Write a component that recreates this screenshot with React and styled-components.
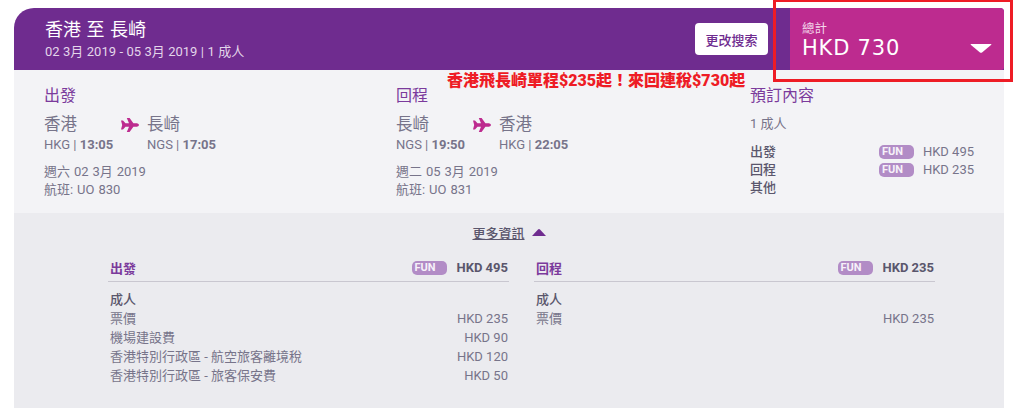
import React from 'react'
import styled, { createGlobalStyle } from 'styled-components'

const GlobalStyle = createGlobalStyle`
  html, body {
    margin: 0;
    background: #fff;
  }
  body {
    font-family: Roboto, "Noto Sans CJK TC", sans-serif;
    color: #77748a;
  }
`

const Page = styled.div`
  position: relative;
  width: 1024px;
  height: 414px;
  padding: 8px 20px 0 14px;
  box-sizing: border-box;
  overflow: hidden;
`

const Header = styled.header`
  display: flex;
  align-items: stretch;
  height: 62px;
  background: #6f2c8f;
  border-radius: 20px 4px 0 0;
  color: #fff;
`

const Trip = styled.div`
  flex: 1;
  padding: 11px 0 0 31px;
`

const TripTitle = styled.div`
  font-size: 18px;
  line-height: 22px;
  word-spacing: 1px;
`

const TripMeta = styled.div`
  margin-top: 2px;
  font-size: 13px;
  line-height: 18px;
  color: #e3d5ea;
  word-spacing: 0.2px;
`

const ChangeButton = styled.button`
  align-self: flex-start;
  width: 73px;
  height: 32px;
  margin: 15px 22px 0 0;
  padding: 0;
  border: 0;
  border-radius: 4px;
  background: #fff;
  color: #6f2c8f;
  font-family: inherit;
  font-size: 13px;
  font-weight: 500;
`

const Total = styled.div`
  position: relative;
  width: 214px;
  padding: 13px 0 0 12px;
  box-sizing: border-box;
  background: #bd2b8f;
  border-radius: 0 4px 3px 0;
`

const TotalLabel = styled.div`
  font-size: 12.5px;
  line-height: 16px;
  color: #f3d8ea;
`

const TotalAmount = styled.div`
  font-family: "DejaVu Sans", sans-serif;
  font-size: 21px;
  line-height: 23px;
  letter-spacing: 0.8px;
`

const Caret = styled.svg`
  position: absolute;
  right: 12px;
  top: 36px;
`

const Details = styled.section`
  display: grid;
  grid-template-columns: 352px 354px 1fr;
  height: 143px;
  padding: 14px 30px 0;
  box-sizing: border-box;
  background: #f3f3f6;
`

const Heading = styled.h2`
  margin: 0 0 5px;
  font-size: 16px;
  line-height: 24px;
  font-weight: 400;
  color: #7b3a9c;
`

const Route = styled.div`
  display: grid;
  grid-template-columns: 76px 27px auto;
  justify-content: start;
`

const City = styled.div`
  display: flex;
  align-items: center;
  font-size: 16.5px;
  line-height: 23px;
  color: #77748a;
`

const Plane = styled.svg`
  display: block;
`

const PlaneCell = styled.div`
  display: flex;
  align-items: center;
  margin-left: 1px;
`

const Times = styled.div`
  grid-column: ${p => (p.$first ? 'span 2' : 'auto')};
  font-size: 13px;
  line-height: 18px;
  white-space: nowrap;

  b {
    font-weight: 700;
  }
`

const FlightInfo = styled.div`
  margin-top: 9px;
  font-size: 13px;
  line-height: 18px;
  word-spacing: 0.7px;
`

const Summary = styled.div`
  padding-top: 2px;
  font-size: 13px;
  line-height: 18px;
`

const Travellers = styled.div`
  margin-bottom: 10px;
`

const SummaryRow = styled.div`
  display: flex;
  align-items: center;
  height: 18px;
`

const RowName = styled.span`
  flex: 1;
  font-weight: ${p => (p.$strong ? 500 : 400)};
  color: ${p => (p.$strong ? '#5a566c' : 'inherit')};
`

const Fun = styled.span`
  display: inline-block;
  width: 35px;
  height: 14px;
  margin-right: 9px;
  padding-left: 3px;
  box-sizing: border-box;
  border-radius: 5px;
  background: #b28cc6;
  color: #f6f1f9;
  font-size: 11px;
  line-height: 14px;
  font-weight: 700;
`

const More = styled.section`
  height: 195px;
  padding-top: 9px;
  box-sizing: border-box;
  background: #ebebef;
`

const MoreToggle = styled.div`
  display: flex;
  justify-content: center;
  align-items: center;
  gap: 7px;
  height: 20px;
  font-size: 13px;
  font-weight: 500;
  color: #5a566c;

  span {
    text-decoration: underline;
  }
`

const Breakdown = styled.div`
  display: grid;
  grid-template-columns: 401px 401px;
  column-gap: 25px;
  margin: 12px 0 0 94px;
`

const ColumnHead = styled.div`
  display: flex;
  align-items: center;
  height: 27px;
  margin-bottom: 8px;
  padding: 0 1px 0 2px;
  border-bottom: 1px solid #c9c7d0;
  font-size: 13px;
`

const LegName = styled.span`
  flex: 1;
  font-weight: 700;
  color: #7b3a9c;
`

const LegPrice = styled.span`
  font-weight: 700;
  color: #5a566c;
  margin-left: 1px;
`

const FeeRow = styled.div`
  display: flex;
  justify-content: space-between;
  padding: 0 1px 0 2px;
  font-size: 13px;
  line-height: 19px;
`

const FeeGroup = styled.div`
  font-size: 13px;
  line-height: 19px;
  padding: 0 1px 0 2px;
  font-weight: 500;
  color: #5a566c;
`

const Highlight = styled.div`
  position: absolute;
  left: 773px;
  top: -1px;
  width: 240px;
  height: 83px;
  box-sizing: border-box;
  border: 3px solid #ee1c25;
`

const Promo = styled.div`
  position: absolute;
  left: 447px;
  top: 70px;
  font-size: 16px;
  line-height: 22px;
  font-weight: 900;
  color: #ee1c25;
  white-space: nowrap;
`

const PlaneIcon = () => (
  <Plane width="18" height="14" viewBox="0 0 18 14">
    <path
      fill="#bd2b8f"
      d="M0 2.5 L2 2.5 L4.5 5.2 L8 5.2 L5.8 0 L8.6 0 L12.4 5.2 L16 5.2 Q18 5.8 18 7 Q18 8.2 16 8.8 L12.4 8.8 L8.6 14 L5.8 14 L8 8.8 L4.5 8.8 L2 11.5 L0 11.5 L1.2 7 Z"
    />
  </Plane>
)

const legs = [
  {
    title: '出發',
    from: '香港',
    to: '長崎',
    fromTime: ['HKG', '13:05'],
    toTime: ['NGS', '17:05'],
    date: '週六 02 3月 2019',
    flight: 'UO 830',
    total: 'HKD 495',
    fees: [
      ['票價', 'HKD 235'],
      ['機場建設費', 'HKD 90'],
      ['香港特別行政區 - 航空旅客離境稅', 'HKD 120'],
      ['香港特別行政區 - 旅客保安費', 'HKD 50']
    ]
  },
  {
    title: '回程',
    from: '長崎',
    to: '香港',
    fromTime: ['NGS', '19:50'],
    toTime: ['HKG', '22:05'],
    date: '週二 05 3月 2019',
    flight: 'UO 831',
    total: 'HKD 235',
    fees: [['票價', 'HKD 235']]
  }
]

const App = () => (
  <Page>
    <GlobalStyle />
    <Header>
      <Trip>
        <TripTitle>香港 至 長崎</TripTitle>
        <TripMeta>02 3月 2019 - 05 3月 2019 | 1 成人</TripMeta>
      </Trip>
      <ChangeButton>更改搜索</ChangeButton>
      <Total>
        <TotalLabel>總計</TotalLabel>
        <TotalAmount>HKD 730</TotalAmount>
        <Caret width="22" height="9" viewBox="0 0 22 9">
          <path fill="#fff" d="M1 0 H21 Q22 0 21 1 L12 8.6 Q11 9 10 8.6 L1 1 Q0 0 1 0 Z" />
        </Caret>
      </Total>
    </Header>
    <Details>
      {legs.map(leg => (
        <div key={leg.title}>
          <Heading>{leg.title}</Heading>
          <Route>
            <City>{leg.from}</City>
            <PlaneCell>
              <PlaneIcon />
            </PlaneCell>
            <City>{leg.to}</City>
            <Times $first>
              {leg.fromTime[0]} | <b>{leg.fromTime[1]}</b>
            </Times>
            <Times>
              {leg.toTime[0]} | <b>{leg.toTime[1]}</b>
            </Times>
          </Route>
          <FlightInfo>
            {leg.date}
            <br />
            航班: {leg.flight}
          </FlightInfo>
        </div>
      ))}
      <div>
        <Heading>預訂內容</Heading>
        <Summary>
          <Travellers>1 成人</Travellers>
          {legs.map(leg => (
            <SummaryRow key={leg.title}>
              <RowName $strong>{leg.title}</RowName>
              <Fun>FUN</Fun>
              {leg.total}
            </SummaryRow>
          ))}
          <SummaryRow>
            <RowName $strong>其他</RowName>
          </SummaryRow>
        </Summary>
      </div>
    </Details>
    <More>
      <MoreToggle>
        <span>更多資訊</span>
        <svg width="14" height="7" viewBox="0 0 14 7">
          <path fill="#6f2c8f" d="M6 0.4 Q7 -0.2 8 0.4 L14 7 H0 Z" />
        </svg>
      </MoreToggle>
      <Breakdown>
        {legs.map(leg => (
          <div key={leg.title}>
            <ColumnHead>
              <LegName>{leg.title}</LegName>
              <Fun>FUN</Fun>
              <LegPrice>{leg.total}</LegPrice>
            </ColumnHead>
            <FeeGroup>成人</FeeGroup>
            {leg.fees.map(([name, price]) => (
              <FeeRow key={name}>
                <span>{name}</span>
                <span>{price}</span>
              </FeeRow>
            ))}
          </div>
        ))}
      </Breakdown>
    </More>
    <Highlight />
    <Promo>香港飛長崎單程$235起！來回連稅$730起</Promo>
  </Page>
)

export default App
